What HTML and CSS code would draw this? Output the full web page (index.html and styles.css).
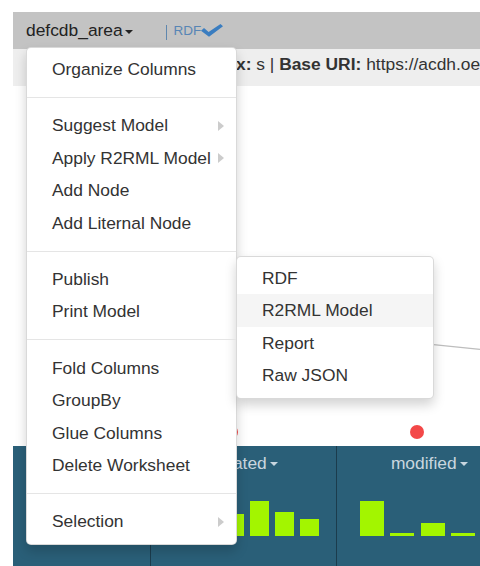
FILE: index.html
```html
<!DOCTYPE html>
<html>
<head>
<meta charset="utf-8">
<link rel="stylesheet" href="styles.css">
</head>
<body>
<div class="app">
  <div class="toolbar">
    <span class="ws-title">defcdb_area<span class="caret"></span></span>
    <span class="sep"></span>
    <span class="rdf">RDF</span>
    <svg class="check" viewBox="0 0 22 13" width="22" height="13"><path d="M0 6.8 L3 4 L7.6 8 L19.5 0 L22 2.2 L8 12.8 Z" fill="#3a7dc0"/></svg>
  </div>
  <div class="infobar"><b>Prefix:</b> s | <b>Base URI:</b> https://acdh.oeaw.ac.at/defcdb/</div>
  <div class="canvas">
    <svg class="edges" width="467" height="360"><line x1="330" y1="249.3" x2="467" y2="263.3" stroke="#bdbdbd" stroke-width="1.3"/></svg>
    <span class="node node-a"></span>
    <span class="node node-b"></span>
  </div>
  <div class="table-head">
    <div class="col">
      <div class="col-label"></div>
      <div class="hist hist-first">
        <span class="bar" style="height:35px"></span>
        <span class="bar" style="height:35px"></span>
        <span class="bar" style="height:35px"></span>
      </div>
    </div>
    <div class="col">
      <div class="col-label">created<span class="caret caret-light"></span></div>
      <div class="hist hist-created">
        <span class="bar" style="height:12px"></span>
        <span class="bar" style="height:28px"></span>
        <span class="bar" style="height:22px"></span>
        <span class="bar" style="height:35px"></span>
        <span class="bar" style="height:24.5px"></span>
        <span class="bar" style="height:17px"></span>
      </div>
    </div>
    <div class="col">
      <div class="col-label">modified<span class="caret caret-light"></span></div>
      <div class="hist hist-modified">
        <span class="bar" style="height:35px"></span>
        <span class="bar" style="height:3px"></span>
        <span class="bar" style="height:13px"></span>
        <span class="bar" style="height:3px"></span>
        <span class="bar" style="height:3px"></span>
      </div>
    </div>
  </div>
</div>

<ul class="menu">
  <li><span class="item">Organize Columns</span></li>
  <li class="divider"></li>
  <li class="has-sub"><span class="item">Suggest Model</span></li>
  <li class="has-sub"><span class="item">Apply R2RML Model</span></li>
  <li><span class="item">Add Node</span></li>
  <li><span class="item">Add Liternal Node</span></li>
  <li class="divider"></li>
  <li class="open">
    <span class="item">Publish</span>
    <ul class="menu submenu">
      <li><span class="item">RDF</span></li>
      <li class="active"><span class="item">R2RML Model</span></li>
      <li><span class="item">Report</span></li>
      <li><span class="item">Raw JSON</span></li>
    </ul>
  </li>
  <li><span class="item">Print Model</span></li>
  <li class="divider"></li>
  <li><span class="item">Fold Columns</span></li>
  <li><span class="item">GroupBy</span></li>
  <li><span class="item">Glue Columns</span></li>
  <li><span class="item">Delete Worksheet</span></li>
  <li class="divider"></li>
  <li class="has-sub"><span class="item">Selection</span></li>
</ul>
</body>
</html>
```

FILE: styles.css
```css
html, body {
  margin: 0;
  padding: 0;
}
body {
  width: 480px;
  height: 566px;
  overflow: hidden;
  position: relative;
  background: #fff;
  font-family: "Liberation Sans", Arial, sans-serif;
  color: #333;
}
.app {
  padding: 12px 0 0 13px;
}
.toolbar {
  height: 37px;
  background: #c3c3c3;
  display: flex;
  align-items: center;
  padding-left: 13px;
  white-space: nowrap;
}
.ws-title {
  font-size: 17.4px;
  color: #222;
  display: flex;
  align-items: center;
}
.caret {
  display: inline-block;
  width: 0;
  height: 0;
  border-top: 4.5px solid #222;
  border-left: 4.5px solid transparent;
  border-right: 4.5px solid transparent;
  margin-left: 2.3px;
  margin-top: 2px;
}
.sep {
  width: 1px;
  height: 15px;
  background: #5f87ae;
  margin-left: 32.5px;
  margin-right: 7px;
  margin-top: 3px;
}
.rdf {
  font-size: 13.5px;
  color: #5785b5;
}
.check {
  display: block;
  margin-top: -1px;
}
.infobar {
  height: 37px;
  box-sizing: border-box;
  background: #eeeeee;
  padding: 4px 0 0 184.3px;
  line-height: 22px;
  font-size: 17.4px;
  white-space: nowrap;
  overflow: hidden;
  color: #333;
}
.canvas {
  height: 360px;
  position: relative;
}
.edges {
  position: absolute;
  left: 0;
  top: 0;
}
.node {
  position: absolute;
  width: 14px;
  height: 14px;
  border-radius: 50%;
  background: #f34848;
}
.node-a {
  left: 211px;
  top: 338.7px;
}
.node-b {
  left: 397.3px;
  top: 338.7px;
}
.table-head {
  height: 120px;
  background: #2a5f78;
  display: grid;
  grid-template-columns: 138px 186px 186px;
}
.col {
  box-sizing: border-box;
  border-right: 1px solid #1b3c4d;
  display: flex;
  flex-direction: column;
  align-items: center;
}
.col-label {
  margin-top: 5px;
  height: 24px;
  line-height: 24px;
  font-size: 17.4px;
  color: #c8d6df;
  display: flex;
  align-items: center;
  white-space: nowrap;
}
.caret-light {
  border-top-color: #c8d6df;
  margin-left: 3.5px;
}
.hist {
  align-self: stretch;
  height: 61px;
  display: flex;
  align-items: flex-end;
}
.bar {
  display: block;
  background: #a3f500;
}
.hist-first {
  padding-left: 24px;
  gap: 6px;
}
.hist-first .bar {
  width: 20px;
}
.hist-created {
  padding-left: 24px;
  gap: 6.5px;
}
.hist-created .bar {
  width: 18.5px;
}
.hist-modified {
  padding-left: 23px;
  gap: 6.3px;
}
.hist-modified .bar {
  width: 24px;
  flex: none;
}

.menu {
  position: absolute;
  left: 26px;
  top: 47px;
  width: 209px;
  margin: 0;
  padding: 5px 0 6px;
  list-style: none;
  background: #fff;
  border: 1px solid rgba(0, 0, 0, 0.15);
  border-radius: 5px;
  box-shadow: 0 6px 12px rgba(0, 0, 0, 0.175);
  font-size: 17.4px;
}
.menu li {
  position: relative;
}
.item {
  display: block;
  padding-left: 25px;
  line-height: 32.4px;
  color: #333;
  white-space: nowrap;
}
.divider {
  height: 1px;
  margin: 11.5px 0;
  background: #e5e5e5;
}
.has-sub > .item::after {
  content: "";
  position: absolute;
  right: 12px;
  top: 50%;
  margin-top: -5px;
  border-left: 6px solid #cccccc;
  border-top: 5px solid transparent;
  border-bottom: 5px solid transparent;
}
.submenu {
  left: 100%;
  top: -7px;
  width: 196px;
}
.submenu .active .item {
  background: #f5f5f5;
}
```
